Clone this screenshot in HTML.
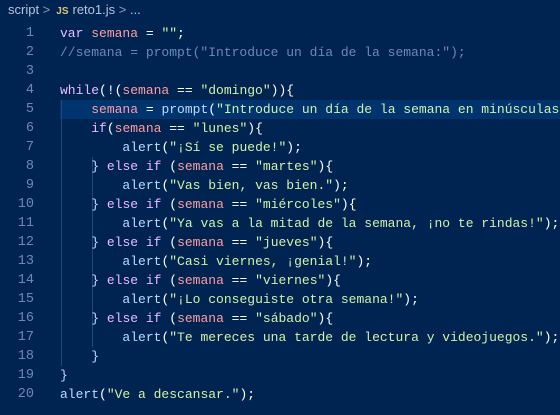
<html><head><style>
body{margin:0;width:560px;height:415px;background:#002451;overflow:hidden;font-family:"Liberation Mono",monospace;}
.bc{position:absolute;top:0;left:0;height:22px;line-height:20px;font-family:"Liberation Sans",sans-serif;font-size:13px;color:#b6c2dc;left:8px;}
.js{color:#e5c07b;font-weight:bold;font-size:10px;margin:0 4px 0 6px}
.ln{position:absolute;left:0;width:34px;text-align:right;color:#7285b7;font-size:13.5px;}
.code{position:absolute;left:60px;font-size:13px;white-space:pre;color:#ffffff;}
.row{position:absolute;height:19px;line-height:19px;}
.k{color:#ebbbff}.v{color:#ff9da4}.s{color:#d1f1a9}.f{color:#bbdaff}.c{color:#7285b7}.p{color:#bbdaff}
.hl{position:absolute;left:60px;right:0;top:100px;height:19px;background:#00346e}
.g{position:absolute;width:1px;background:#2a4575}
</style></head><body>
<div class="bc">script <span style="color:#8a9bc0">&gt;</span><span class="js">JS</span>reto1.js <span style="color:#8a9bc0">&gt;</span> ...</div>
<div class="hl"></div>
<div class="g" style="left:61px;top:100px;height:266px"></div>
<div class="g" style="left:92px;top:157px;height:190px"></div>
<div id="L"></div>
<script>
const lines=[
'<span class="k">var</span> <span class="v">semana</span> = <span class="s">""</span>;',
'<span class="c">//semana = prompt("Introduce un día de la semana:");</span>',
'',
'<span class="k">while</span>(!(<span class="v">semana</span> == <span class="s">"domingo"</span>)){',
'    <span class="v">semana</span> = <span class="f">prompt</span>(<span class="s">"Introduce un día de la semana en minúsculas:</span>',
'    <span class="k">if</span>(<span class="v">semana</span> == <span class="s">"lunes"</span>){',
'        <span class="f">alert</span>(<span class="s">"¡Sí se puede!"</span>);',
'    <span class="p">}</span> <span class="k">else if</span> (<span class="v">semana</span> == <span class="s">"martes"</span>){',
'        <span class="f">alert</span>(<span class="s">"Vas bien, vas bien."</span>);',
'    <span class="p">}</span> <span class="k">else if</span> (<span class="v">semana</span> == <span class="s">"miércoles"</span>){',
'        <span class="f">alert</span>(<span class="s">"Ya vas a la mitad de la semana, ¡no te rindas!"</span>);',
'    <span class="p">}</span> <span class="k">else if</span> (<span class="v">semana</span> == <span class="s">"jueves"</span>){',
'        <span class="f">alert</span>(<span class="s">"Casi viernes, ¡genial!"</span>);',
'    <span class="p">}</span> <span class="k">else if</span> (<span class="v">semana</span> == <span class="s">"viernes"</span>){',
'        <span class="f">alert</span>(<span class="s">"¡Lo conseguiste otra semana!"</span>);',
'    <span class="p">}</span> <span class="k">else if</span> (<span class="v">semana</span> == <span class="s">"sábado"</span>){',
'        <span class="f">alert</span>(<span class="s">"Te mereces una tarde de lectura y videojuegos."</span>);',
'    <span class="p">}</span>',
'<span class="p">}</span>',
'<span class="f">alert</span>(<span class="s">"Ve a descansar."</span>);'];
let h='';
lines.forEach((l,i)=>{const t=24+19*i;
h+=`<div class="row ln" style="top:${t}px">${i+1}</div><div class="row code" style="top:${t}px">${l}</div>`;});
document.getElementById('L').innerHTML=h;
</script>
</body></html>
